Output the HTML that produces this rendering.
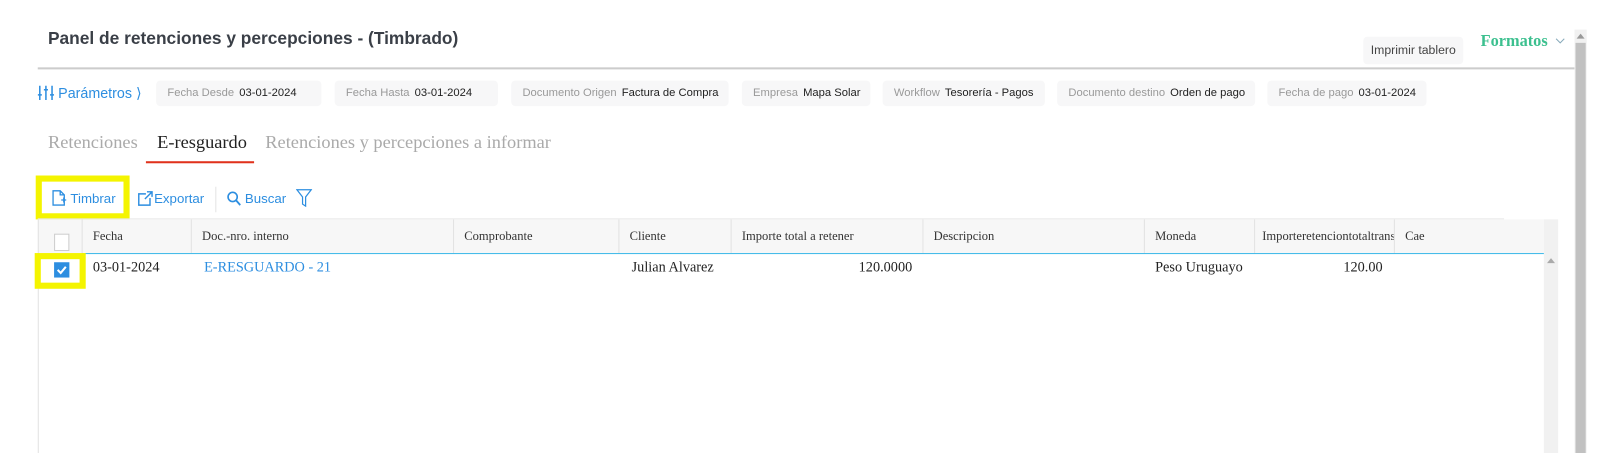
<!DOCTYPE html>
<html><head><meta charset="utf-8"><style>
body{margin:0;width:1600px;height:444px;overflow:hidden;background:#fff;font-family:"Liberation Sans",sans-serif;position:relative}
#w{position:absolute;left:0;top:0;width:1568px;height:436px;transform:scale(1.0204);transform-origin:0 0}
.a{position:absolute}
.chip{position:absolute;top:79px;height:25px;background:#f7f7f8;border-radius:4px;font-size:11px;line-height:25px;color:#222;white-space:nowrap;padding-left:11px;box-sizing:border-box}
.chip span{color:#999;margin-right:5px}
.th{position:absolute;top:215px;height:33px;line-height:33px;font-family:"Liberation Serif",serif;font-size:12.3px;color:#333;border-left:1px solid #e2e2e2;padding-left:10px;box-sizing:border-box;overflow:hidden;white-space:nowrap}
.td{position:absolute;top:255px;font-family:"Liberation Serif",serif;font-size:14px;color:#222;white-space:nowrap}
.tab{position:absolute;top:129px;font-family:"Liberation Serif",serif;font-size:18px;color:#aaa}
</style></head><body><div id="w">
<div class="a" style="left:47px;top:28px;font-size:17px;font-weight:bold;color:#3a3f47">Panel de retenciones y percepciones - (Timbrado)</div>
<div class="a" style="left:1336px;top:36px;width:98px;height:27px;background:#f7f7f8;border-radius:4px;font-size:12px;line-height:27px;text-align:center;color:#444">Imprimir tablero</div>
<div class="a" style="left:1451px;top:32px;font-family:'Liberation Serif',serif;font-weight:bold;font-size:16px;color:#3cc08f">Formatos</div>
<svg class="a" style="left:1524px;top:37px" width="10" height="7"><path d="M1 1l4 4 4-4" stroke="#8ab" fill="none"/></svg>
<div class="a" style="left:37px;top:66px;width:1506px;height:2px;background:#ccc"></div>
<div class="a" style="left:1543px;top:29px;width:12px;height:415px;background:#f1f1f1"></div>
<div class="a" style="left:1544px;top:42px;width:10px;height:402px;background:#c1c1c1"></div>
<svg class="a" style="left:1545px;top:33px" width="8" height="5"><path d="M0 5L4 0 8 5z" fill="#999"/></svg>
<svg class="a" style="left:37px;top:83px" width="16" height="16"><g stroke="#2d8ee0" stroke-width="1.5"><path d="M2 1v14M8 1v14M14 1v14"/><path d="M0 10h4M6 5h4M12 10h4"/></g></svg>
<div class="a" style="left:57px;top:83px;font-size:14px;color:#2d8ee0">Parámetros ⟩</div>
<div class="chip" style="left:153px;width:162px"><span>Fecha Desde</span>03-01-2024</div>
<div class="chip" style="left:328px;width:160px"><span>Fecha Hasta</span>03-01-2024</div>
<div class="chip" style="left:501px;width:213px"><span>Documento Origen</span>Factura de Compra</div>
<div class="chip" style="left:727px;width:126px"><span>Empresa</span>Mapa Solar</div>
<div class="chip" style="left:865px;width:159px"><span>Workflow</span>Tesorería - Pagos</div>
<div class="chip" style="left:1036px;width:194px"><span>Documento destino</span>Orden de pago</div>
<div class="chip" style="left:1242px;width:156px"><span>Fecha de pago</span>03-01-2024</div>
<div class="tab" style="left:47px">Retenciones</div>
<div class="tab" style="left:154px;color:#222">E-resguardo</div>
<div class="a" style="left:143px;top:158px;width:106px;height:2px;background:#e0321c"></div>
<div class="tab" style="left:260px">Retenciones y percepciones a informar</div>
<div class="a" style="left:35px;top:172px;width:92px;height:43px;box-sizing:border-box;border:6px solid #f4f400"></div>
<svg class="a" style="left:51px;top:186px" width="14" height="16"><path d="M1 1h7l4 4v10H1z M8 1v4h4" stroke="#2d8ee0" fill="none" stroke-width="1.3"/><path d="M9 10h5M11.5 7.5v5" stroke="#2d8ee0" stroke-width="1.3"/></svg>
<div class="a" style="left:69px;top:187px;font-size:13px;color:#2d8ee0">Timbrar</div>
<svg class="a" style="left:135px;top:187px" width="16" height="15"><path d="M8 3H1v11h11V7" stroke="#2d8ee0" fill="none" stroke-width="1.4"/><path d="M7 8l7-7M9 1h5v5" stroke="#2d8ee0" fill="none" stroke-width="1.4"/></svg>
<div class="a" style="left:151px;top:187px;font-size:13px;color:#2d8ee0">Exportar</div>
<div class="a" style="left:211px;top:183px;width:1px;height:25px;background:#e3e3e3"></div>
<svg class="a" style="left:222px;top:187px" width="14" height="15"><circle cx="6" cy="6" r="4.5" stroke="#2d8ee0" stroke-width="1.6" fill="none"/><path d="M9.5 9.5l4 4.5" stroke="#2d8ee0" stroke-width="1.8"/></svg>
<div class="a" style="left:240px;top:187px;font-size:13px;color:#2d8ee0">Buscar</div>
<svg class="a" style="left:290px;top:185px" width="16" height="18"><path d="M1 1h14l-5.5 7v9l-3-2V8z" stroke="#2d8ee0" fill="none" stroke-width="1.2"/></svg>
<div class="a" style="left:37px;top:214px;width:1437px;height:1px;background:#e8e8e8"></div>
<div class="a" style="left:37px;top:215px;width:1476px;height:33px;background:#f7f7f7"></div>
<div class="a" style="left:1513px;top:215px;width:14px;height:229px;background:#f1f1f1"></div>
<svg class="a" style="left:1516px;top:253px" width="8" height="5"><path d="M0 5L4 0 8 5z" fill="#aaa"/></svg>
<div class="a" style="left:37px;top:215px;width:1px;height:229px;background:#e2e2e2"></div>
<div class="a" style="left:53px;top:229px;width:13px;height:15px;border:1px solid #ccc;background:#fff"></div>
<div class="th" style="left:80px;width:107px">Fecha</div>
<div class="th" style="left:187px;width:257px">Doc.-nro. interno</div>
<div class="th" style="left:444px;width:162px">Comprobante</div>
<div class="th" style="left:606px;width:110px">Cliente</div>
<div class="th" style="left:716px;width:188px">Importe total a retener</div>
<div class="th" style="left:904px;width:217px">Descripcion</div>
<div class="th" style="left:1121px;width:108px">Moneda</div>
<div class="th" style="left:1229px;width:137px;padding-left:7px">Importeretenciontotaltransaccion</div>
<div class="th" style="left:1366px;width:147px">Cae</div>
<div class="a" style="left:80px;top:248px;width:1433px;height:1px;background:#3cb8e8"></div>
<div class="a" style="left:34px;top:248px;width:50px;height:35px;box-sizing:border-box;border:6px solid #f4f400"></div>
<div class="a" style="left:53px;top:257px;width:15px;height:15px;background:#2d8ee0"></div>
<svg class="a" style="left:53px;top:257px" width="15" height="15"><path d="M3.5 7.5l3 3 5-6" stroke="#fff" stroke-width="2" fill="none"/></svg>
<div class="td" style="left:91px">03-01-2024</div>
<div class="td" style="left:200px;color:#2d8ee0">E-RESGUARDO - 21</div>
<div class="td" style="left:619px">Julian Alvarez</div>
<div class="td" style="left:816px;width:78px;text-align:right">120.0000</div>
<div class="td" style="left:1132px">Peso Uruguayo</div>
<div class="td" style="left:1270px;width:85px;text-align:right">120.00</div>
</div></body></html>
